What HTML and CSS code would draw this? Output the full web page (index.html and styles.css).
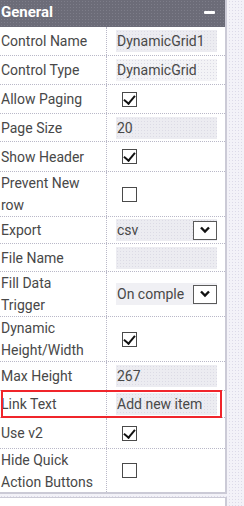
FILE: index.html
```html
<!DOCTYPE html>
<html lang="en">
<head>
  <meta charset="UTF-8">
  <title>Properties</title>
  <link rel="stylesheet" href="styles.css">
</head>
<body>
  <div class="page">
    <div class="panel">
      <div class="panel-head">
        <span class="panel-title">General</span>
        <span class="collapse"></span>
      </div>

      <div class="row">
        <div class="label">Control Name</div>
        <div class="value"><span class="field">DynamicGrid1</span></div>
      </div>
      <div class="row">
        <div class="label">Control Type</div>
        <div class="value"><span class="field plain">DynamicGrid</span></div>
      </div>
      <div class="row">
        <div class="label">Allow Paging</div>
        <div class="value"><span class="check on"></span></div>
      </div>
      <div class="row short">
        <div class="label">Page Size</div>
        <div class="value"><span class="field">20</span></div>
      </div>
      <div class="row wide">
        <div class="label">Show Header</div>
        <div class="value"><span class="check on"></span></div>
      </div>
      <div class="row tall">
        <div class="label">Prevent New<br>row</div>
        <div class="value"><span class="check"></span></div>
      </div>
      <div class="row shorter">
        <div class="label">Export</div>
        <div class="value">
          <span class="field select">csv<span class="drop"><svg width="12" height="8" viewBox="0 0 12 8"><path d="M2 1.5 L6 5.5 L10 1.5" fill="none" stroke="#111" stroke-width="2.4"/></svg></span></span>
        </div>
      </div>
      <div class="row short">
        <div class="label">File Name</div>
        <div class="value"><span class="field"></span></div>
      </div>
      <div class="row tall">
        <div class="label">Fill Data<br>Trigger</div>
        <div class="value">
          <span class="field select clip">On comple<span class="drop"><svg width="12" height="8" viewBox="0 0 12 8"><path d="M2 1.5 L6 5.5 L10 1.5" fill="none" stroke="#111" stroke-width="2.4"/></svg></span></span>
        </div>
      </div>
      <div class="row tall">
        <div class="label">Dynamic<br>Height/Width</div>
        <div class="value"><span class="check on"></span></div>
      </div>
      <div class="row">
        <div class="label">Max Height</div>
        <div class="value"><span class="field">267</span></div>
      </div>
      <div class="row shorter marked">
        <div class="label">Link Text</div>
        <div class="value"><span class="field">Add new item</span></div>
      </div>
      <div class="row taller">
        <div class="label">Use v2</div>
        <div class="value"><span class="check on"></span></div>
      </div>
      <div class="row tall last">
        <div class="label">Hide Quick<br>Action Buttons</div>
        <div class="value"><span class="check"></span></div>
      </div>
    </div>
    <div class="next-panel"></div>
  </div>
</body>
</html>
```

FILE: styles.css
```css
* {
  margin: 0;
  padding: 0;
  box-sizing: border-box;
}

body {
  font-family: Roboto, "Liberation Sans", Arial, sans-serif;
  font-size: 14px;
  color: #484848;
  background: #f3f2f8;
  background-image: radial-gradient(#dcdae8 1px, transparent 1px);
  background-size: 3px 3px;
  width: 244px;
  height: 506px;
  overflow: hidden;
}

.page {
  width: 227px;
}

.panel {
  background: #ffffff;
  border-right: 2px solid #cbcad6;
  border-bottom: 2px solid #cbcad6;
}

/* Kepala panel */
.panel-head {
  height: 27px;
  background: #6c6c78;
  background-image: radial-gradient(#7d7d89 1px, transparent 1px);
  background-size: 3px 3px;
  display: flex;
  align-items: center;
  justify-content: space-between;
  padding: 0 8px 3px 1px;
}

.panel-title {
  color: #ffffff;
  font-weight: bold;
  font-size: 15px;
}

.collapse {
  width: 11px;
  height: 3px;
  background: #ffffff;
  border-radius: 1px;
  margin-right: 2px;
}

.row {
  display: flex;
  height: 29px;
  border-bottom: 1px dotted #b9b8c8;
  position: relative;
}

.row.short {
  height: 28px;
}

.row.shorter {
  height: 27px;
}

.row.wide {
  height: 30px;
}

.row.taller {
  height: 31px;
}

.row.tall {
  height: 45px;
}

.row.last {
  border-bottom: none;
  height: 43px;
}

.label {
  width: 107px;
  padding-left: 1px;
  display: flex;
  align-items: center;
  line-height: 22px;
  border-right: 1px dotted #b9b8c8;
  white-space: nowrap;
}

.value {
  flex: 1;
  display: flex;
  align-items: center;
  padding-left: 9px;
  padding-right: 7px;
}

.field {
  width: 101px;
  height: 22px;
  line-height: 22px;
  padding-left: 1px;
  background: #ececf1;
  background-image: radial-gradient(#dcdbe5 1px, transparent 1px);
  background-size: 3px 3px;
  white-space: nowrap;
  overflow: hidden;
}

.field.plain {
  background-color: #f3f3f6;
}

.select {
  display: flex;
  align-items: center;
  justify-content: space-between;
}

.drop {
  width: 24px;
  height: 19px;
  border: 1px solid #5a5a5a;
  background: #ffffff;
  display: flex;
  align-items: center;
  justify-content: center;
  flex-shrink: 0;
}

.clip {
  background: #f0f0f4;
}

.check {
  width: 15px;
  height: 15px;
  border: 1px solid #4a4a4a;
  background: #ffffff;
  margin-left: 6px;
  position: relative;
}

.check.on::after {
  content: "";
  position: absolute;
  left: 3px;
  top: 0px;
  width: 5px;
  height: 9px;
  border-right: 2.5px solid #111;
  border-bottom: 2.5px solid #111;
  transform: rotate(40deg);
}

/* Kotak merah penanda */
.marked::before {
  content: "";
  position: absolute;
  left: 1px;
  top: -1px;
  right: 3px;
  bottom: -1px;
  border: 2px solid #f0252b;
  pointer-events: none;
}

.next-panel {
  margin-top: 3px;
  height: 20px;
  background: #ffffff;
  border-top: 1px solid #cbcad6;
  border-right: 2px solid #cbcad6;
}
```
